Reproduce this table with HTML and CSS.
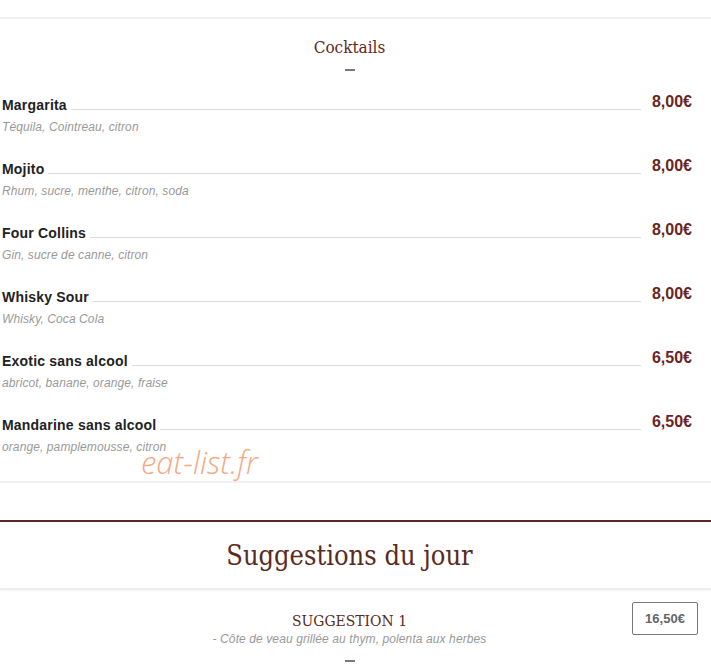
FILE: index.html
```html
<!DOCTYPE html>
<html lang="fr">
<head>
<meta charset="utf-8">
<title>Cocktails</title>
<link rel="stylesheet" href="styles.css">
</head>
<body>
<div class="top-space"></div>
<section class="menu-section">
  <h2 class="section-title">Cocktails</h2>
  <div class="dash"></div>
  <ul class="items">
    <li class="item">
      <div class="item-row"><span class="item-name">Margarita</span><span class="leader"></span><span class="item-price">8,00€</span></div>
      <div class="item-desc">Téquila, Cointreau, citron</div>
    </li>
    <li class="item">
      <div class="item-row"><span class="item-name">Mojito</span><span class="leader"></span><span class="item-price">8,00€</span></div>
      <div class="item-desc">Rhum, sucre, menthe, citron, soda</div>
    </li>
    <li class="item">
      <div class="item-row"><span class="item-name">Four Collins</span><span class="leader"></span><span class="item-price">8,00€</span></div>
      <div class="item-desc">Gin, sucre de canne, citron</div>
    </li>
    <li class="item">
      <div class="item-row"><span class="item-name">Whisky Sour</span><span class="leader"></span><span class="item-price">8,00€</span></div>
      <div class="item-desc">Whisky, Coca Cola</div>
    </li>
    <li class="item">
      <div class="item-row"><span class="item-name">Exotic sans alcool</span><span class="leader"></span><span class="item-price">6,50€</span></div>
      <div class="item-desc">abricot, banane, orange, fraise</div>
    </li>
    <li class="item">
      <div class="item-row"><span class="item-name">Mandarine sans alcool</span><span class="leader"></span><span class="item-price">6,50€</span></div>
      <div class="item-desc">orange, pamplemousse, citron</div>
    </li>
  </ul>
  <div class="watermark">eat-list.fr</div>
</section>
<div class="gap"></div>
<section class="suggestions">
  <h2 class="big-title">Suggestions du jour</h2>
  <div class="suggestion">
    <h3 class="sugg-title">SUGGESTION 1</h3>
    <div class="sugg-desc">- Côte de veau grillée au thym, polenta aux herbes</div>
    <div class="dash dash-sugg"></div>
    <div class="sugg-price">16,50€</div>
  </div>
</section>
</body>
</html>
```

FILE: styles.css
```css
* { box-sizing: border-box; }
html, body { margin: 0; padding: 0; background: #fff; }
body { font-family: "Liberation Sans", Arial, sans-serif; width: 711px; overflow: hidden; }

.top-space { height: 17px; }

.menu-section {
  position: relative;
  border-top: 2px solid #f1f1f1;
  border-bottom: 2px solid #efefef;
  padding-top: 17px;
  padding-bottom: 12px;
}

.section-title {
  margin: 0 12px 0 0;
  text-align: center;
  font-family: "DejaVu Serif", serif;
  font-stretch: condensed;
  font-weight: normal;
  font-size: 17px;
  line-height: 22px;
  color: #5b2a22;
}

.dash {
  width: 10px;
  height: 2px;
  background: #7a7a7a;
  margin: 11px auto 0;
  position: relative;
  left: -6px;
}

.items { list-style: none; margin: 24px 0 0; padding: 0 19px 0 2px; }
.item { height: 64px; }
.item:last-child { height: 54px; }

.item-row { display: flex; align-items: flex-end; height: 18px; }
.item-name {
  font-weight: bold;
  font-size: 14px;
  letter-spacing: 0.2px;
  color: #222;
  line-height: 16px;
  padding-right: 4px;
}
.leader {
  flex: 1;
  border-bottom: 1px solid #dcdcdc;
  margin-bottom: 3px;
}
.item-price {
  font-weight: bold;
  font-size: 16px;
  line-height: 18px;
  color: #6a2424;
  padding-left: 11px;
  position: relative;
  top: -2px;
}
.item-desc {
  margin-top: 7px;
  font-style: italic;
  font-size: 12px;
  letter-spacing: 0.1px;
  line-height: 14px;
  color: #999;
}

.watermark {
  position: absolute;
  left: 141px;
  top: 425px;
  font-family: "Open Sans", sans-serif;
  font-style: italic;
  font-weight: 300;
  font-size: 31px;
  line-height: 36px;
  color: #f3a983;
}

.gap { height: 37px; }

.suggestions { border-top: 2px solid #5b2a22; }

.big-title {
  margin: 0;
  text-align: center;
  font-family: "DejaVu Serif", serif;
  font-stretch: condensed;
  font-weight: normal;
  font-size: 27px;
  line-height: 32px;
  padding: 18px 12px 16px 0;
  color: #5b2a22;
  border-bottom: 2px solid #eeeeee;
  box-shadow: 0 1px 2px rgba(0,0,0,0.05);
}

.suggestion { position: relative; text-align: center; padding-top: 21px; padding-right: 12px; }
.sugg-title {
  margin: 0;
  font-family: "DejaVu Serif", serif;
  font-stretch: condensed;
  font-weight: normal;
  font-size: 15.5px;
  line-height: 20px;
  color: #5b2a22;
}
.sugg-desc {
  font-style: italic;
  font-size: 12px;
  letter-spacing: 0.1px;
  line-height: 16px;
  color: #999;
}
.dash-sugg { margin-top: 13px; left: 0; }

.sugg-price {
  position: absolute;
  right: 13px;
  top: 12px;
  width: 66px;
  height: 33px;
  border: 1px solid #777;
  border-radius: 2px;
  font-weight: bold;
  font-size: 13px;
  line-height: 31px;
  color: #666;
  text-align: center;
}
```
